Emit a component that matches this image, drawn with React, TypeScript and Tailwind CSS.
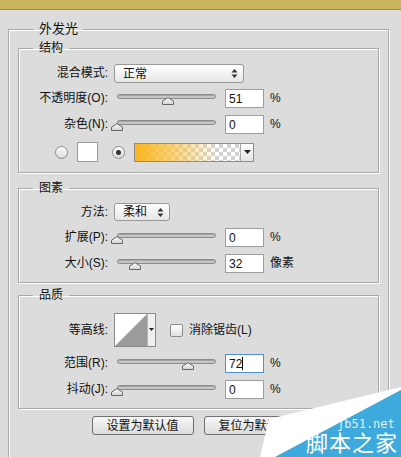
import React from 'react';

const BOX = 'border border-[#a9a9a9] shadow-[inset_1px_1px_0_#ffffff,1px_1px_0_#ffffff]';

function Thumb() {
  return (
    <svg width="12" height="8" viewBox="0 0 12 8">
      <defs>
        <linearGradient id="thumbg" x1="0" y1="0" x2="0" y2="1">
          <stop offset="0" stopColor="#ffffff" />
          <stop offset="1" stopColor="#d2d2d2" />
        </linearGradient>
      </defs>
      <path d="M0.5 7.5V4.2L6 0.6L11.5 4.2V7.5Z" fill="url(#thumbg)" stroke="#666666" strokeWidth="1" />
    </svg>
  );
}

function UpDown() {
  return (
    <svg width="7" height="11" viewBox="0 0 7 11">
      <path d="M0.5 4.5L3.5 1L6.5 4.5Z" fill="#333" />
      <path d="M0.5 6.5L3.5 10L6.5 6.5Z" fill="#333" />
    </svg>
  );
}

function DownArrow() {
  return (
    <svg width="7" height="4" viewBox="0 0 7 4">
      <path d="M0 0H7L3.5 4Z" fill="#222" />
    </svg>
  );
}

function Label({ children }: { children: React.ReactNode }) {
  return <div className="w-[89px] shrink-0 text-right leading-[19px]">{children}</div>;
}

function Select({ value, width }: { value: string; width: string }) {
  return (
    <div
      className={`ml-[6px] flex h-full items-center justify-between rounded-[3px] border border-[#999999] bg-gradient-to-b from-white to-[#e6e6e6] pl-[8px] pr-[5px] ${width}`}
    >
      <span className="leading-none">{value}</span>
      <UpDown />
    </div>
  );
}

interface SliderRowProps {
  label: string;
  value: string;
  thumb: number;
  unit: string;
  focused?: boolean;
  className: string;
}

function SliderRow({ label, value, thumb, unit, focused, className }: SliderRowProps) {
  return (
    <div className={`flex h-[19px] items-start ${className}`}>
      <Label>{label}</Label>
      <div className="relative ml-[6px] h-[19px] w-[111px] shrink-0">
        <div className="ml-[3px] mt-[5px] h-[5px] w-[99px] rounded-full border border-[#8a8a8a] bg-[#c6c6c6] shadow-[inset_0_1px_0_#a5a5a5]" />
        <div className="absolute top-[8px] leading-none" style={{ left: thumb - 120 }}>
          <Thumb />
        </div>
      </div>
      <div
        className={`flex h-[19px] w-[39px] shrink-0 items-center border bg-white pl-[3px] ${
          focused ? 'border-[#4f8fd6]' : 'border-[#9d9d9d]'
        }`}
      >
        <span className="leading-none">{value}</span>
        {focused && <span className="h-[13px] w-px bg-black" />}
      </div>
      <div className="ml-[6px] leading-[19px]">{unit}</div>
    </div>
  );
}

function Radio({ checked }: { checked?: boolean }) {
  return (
    <div className="flex h-[13px] w-[13px] shrink-0 items-center justify-center rounded-full border border-[#8c8c8c] bg-gradient-to-b from-white to-[#d8d8d8]">
      {checked && <div className="h-[5px] w-[5px] rounded-full bg-[#333333]" />}
    </div>
  );
}

function Contour() {
  return (
    <svg width="42" height="34" viewBox="0 0 42 34" className="ml-[6px] shrink-0">
      <rect x="0.5" y="0.5" width="41" height="33" fill="#ffffff" stroke="#8a8a8a" />
      <path d="M1 33L33 1V33Z" fill="#9b9b9b" />
      <rect x="33.5" y="1" width="7.5" height="32" fill="#f0f0f0" />
      <line x1="33.5" y1="1" x2="33.5" y2="33" stroke="#b5b5b5" />
      <path d="M35 15H40L37.5 18Z" fill="#222" />
    </svg>
  );
}

function Watermark() {
  return (
    <div className="absolute bottom-0 right-0 h-[70px] w-[141px]">
      <svg width="141" height="70" viewBox="0 0 141 70" className="absolute left-0 top-0">
        <path d="M0 70L9 32L141 0V3L15 70Z" fill="#ffffff" />
        <path d="M15 70L141 3V70Z" fill="#3ea9dd" />
      </svg>
      <span className="absolute left-[77px] top-[30px] font-['DejaVu_Sans_Mono',monospace] text-[12px] leading-[14px] text-[#dff3fc]">
        jb51.net
      </span>
      <span className="absolute left-[46px] top-[43px] text-[22px] leading-[28px] tracking-[1px] text-white">
        脚本之家
      </span>
    </div>
  );
}

const sliderRows = {
  structure: [
    { label: '不透明度(O):', value: '51', thumb: 168, unit: '%', className: 'mt-[6px]' },
    { label: '杂色(N):', value: '0', thumb: 117, unit: '%', className: 'mt-[7px]' },
  ],
  elements: [
    { label: '扩展(P):', value: '0', thumb: 117, unit: '%', className: 'mt-[7px]' },
    { label: '大小(S):', value: '32', thumb: 135, unit: '像素', className: 'mt-[7px]' },
  ],
  quality: [
    { label: '范围(R):', value: '72', thumb: 188, unit: '%', className: 'mt-[7px]', focused: true },
    { label: '抖动(J):', value: '0', thumb: 117, unit: '%', className: 'mt-[7px]' },
  ],
};

export default function App() {
  return (
    <div className="relative h-[457px] w-[401px] overflow-hidden bg-[#dcdcdc] font-['Liberation_Sans','Noto_Sans_CJK_SC',sans-serif] text-[12px] text-[#111111]">
      <div className="h-[10px] border-b border-[#9a8848] bg-[#cab45c]" />

      <fieldset className={`ml-[8px] mt-[11px] w-[381px] px-[9px] pb-[60px] ${BOX}`}>
        <legend className="ml-[16px] px-[5px] text-[13px] leading-[16px]">外发光</legend>

        <fieldset className={`mt-[3px] pb-[10px] ${BOX}`}>
          <legend className="ml-[14px] px-[6px] leading-[16px]">结构</legend>
          <div className="mt-[8px] flex h-[19px]">
            <Label>混合模式:</Label>
            <Select value="正常" width="w-[130px]" />
          </div>
          {sliderRows.structure.map((r) => (
            <SliderRow key={r.label} {...r} />
          ))}
          <div className="mt-[8px] flex h-[20px] items-center pl-[36px]">
            <Radio />
            <div className="ml-[9px] h-[20px] w-[21px] border border-[#9a9a9a] bg-white" />
            <div className="ml-[14px]">
              <Radio checked />
            </div>
            <div className="ml-[9px] flex h-[19px] w-[120px] border border-[#8c8c8c]">
              <div className="flex-1 bg-[conic-gradient(#d4d4d4_25%,#ffffff_0_50%,#d4d4d4_0_75%,#ffffff_0)] bg-[length:8px_8px]">
                <div className="h-full w-full bg-[linear-gradient(to_right,#f9b51d,rgba(250,196,70,0.75)_35%,rgba(255,255,255,0)_80%)]" />
              </div>
              <div className="flex w-[13px] items-center justify-center border-l border-[#a8a8a8] bg-gradient-to-b from-white to-[#e4e4e4]">
                <DownArrow />
              </div>
            </div>
          </div>
        </fieldset>

        <fieldset className={`mt-[7px] pb-[9px] ${BOX}`}>
          <legend className="ml-[14px] px-[6px] leading-[16px]">图素</legend>
          <div className="mt-[7px] flex h-[18px]">
            <Label>方法:</Label>
            <Select value="柔和" width="w-[56px]" />
          </div>
          {sliderRows.elements.map((r) => (
            <SliderRow key={r.label} {...r} />
          ))}
        </fieldset>

        <fieldset className={`mt-[4px] pb-[9px] ${BOX}`}>
          <legend className="ml-[14px] px-[6px] leading-[16px]">品质</legend>
          <div className="mt-[10px] flex h-[34px] items-center">
            <Label>等高线:</Label>
            <Contour />
            <div className="ml-[14px] h-[13px] w-[13px] rounded-[2px] border border-[#8c8c8c] bg-gradient-to-b from-white to-[#e2e2e2]" />
            <span className="ml-[6px]">消除锯齿(L)</span>
          </div>
          {sliderRows.quality.map((r) => (
            <SliderRow key={r.label} {...r} />
          ))}
        </fieldset>

        <div className="mt-[7px] flex justify-center gap-[10px]">
          <button className="h-[19px] w-[102px] rounded-[3px] border border-[#707070] bg-gradient-to-b from-[#f7f7f7] to-[#dcdcdc] leading-none">
            设置为默认值
          </button>
          <button className="h-[19px] w-[102px] rounded-[3px] border border-[#707070] bg-gradient-to-b from-[#f7f7f7] to-[#dcdcdc] leading-none">
            复位为默认值
          </button>
        </div>
      </fieldset>

      <Watermark />
    </div>
  );
}
